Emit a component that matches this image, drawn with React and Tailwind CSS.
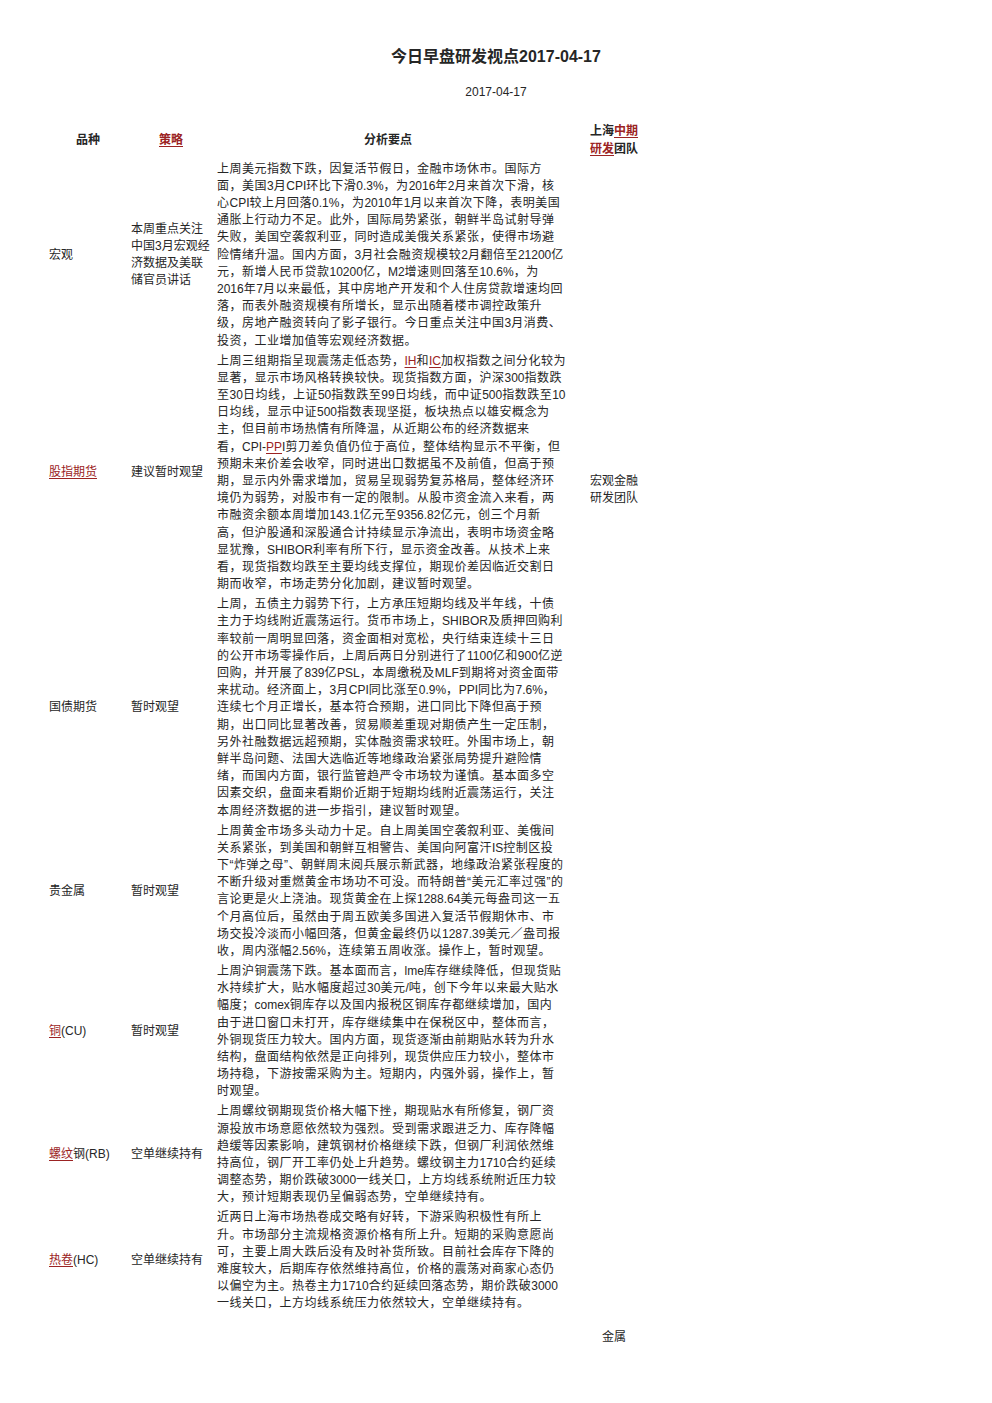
const font = { fontFamily: '"Liberation Sans", "Noto Sans CJK SC", sans-serif' }

const rows = [
  {
    name: '宏观',
    strategy: ['本周重点关注', '中国3月宏观经', '济数据及美联', '储官员讲话'],
    lines: [
      '上周美元指数下跌，因复活节假日，金融市场休市。国际方',
      '面，美国3月CPI环比下滑0.3%，为2016年2月来首次下滑，核',
      '心CPI较上月回落0.1%，为2010年1月以来首次下降，表明美国',
      '通胀上行动力不足。此外，国际局势紧张，朝鲜半岛试射导弹',
      '失败，美国空袭叙利亚，同时造成美俄关系紧张，使得市场避',
      '险情绪升温。国内方面，3月社会融资规模较2月翻倍至21200亿',
      '元，新增人民币贷款10200亿，M2增速则回落至10.6%，为',
      '2016年7月以来最低，其中房地产开发和个人住房贷款增速均回',
      '落，而表外融资规模有所增长，显示出随着楼市调控政策升',
      '级，房地产融资转向了影子银行。今日重点关注中国3月消费、',
      '投资，工业增加值等宏观经济数据。',
    ],
  },
  {
    name: '[股指期货]',
    strategy: ['建议暂时观望'],
    lines: [
      '上周三组期指呈现震荡走低态势，[IH]和[IC]加权指数之间分化较为',
      '显著，显示市场风格转换较快。现货指数方面，沪深300指数跌',
      '至30日均线，上证50指数跌至99日均线，而中证500指数跌至10',
      '日均线，显示中证500指数表现坚挺，板块热点以雄安概念为',
      '主，但目前市场热情有所降温，从近期公布的经济数据来',
      '看，CPI-[PP]I剪刀差负值仍位于高位，整体结构显示不平衡，但',
      '预期未来价差会收窄，同时进出口数据虽不及前值，但高于预',
      '期，显示内外需求增加，贸易呈现弱势复苏格局，整体经济环',
      '境仍为弱势，对股市有一定的限制。从股市资金流入来看，两',
      '市融资余额本周增加143.1亿元至9356.82亿元，创三个月新',
      '高，但沪股通和深股通合计持续显示净流出，表明市场资金略',
      '显犹豫，SHIBOR利率有所下行，显示资金改善。从技术上来',
      '看，现货指数均跌至主要均线支撑位，期现价差因临近交割日',
      '期而收窄，市场走势分化加剧，建议暂时观望。',
    ],
  },
  {
    name: '国债期货',
    strategy: ['暂时观望'],
    lines: [
      '上周，五债主力弱势下行，上方承压短期均线及半年线，十债',
      '主力于均线附近震荡运行。货币市场上，SHIBOR及质押回购利',
      '率较前一周明显回落，资金面相对宽松，央行结束连续十三日',
      '的公开市场零操作后，上周后两日分别进行了1100亿和900亿逆',
      '回购，并开展了839亿PSL，本周缴税及MLF到期将对资金面带',
      '来扰动。经济面上，3月CPI同比涨至0.9%，PPI同比为7.6%，',
      '连续七个月正增长，基本符合预期，进口同比下降但高于预',
      '期，出口同比显著改善，贸易顺差重现对期债产生一定压制，',
      '另外社融数据远超预期，实体融资需求较旺。外围市场上，朝',
      '鲜半岛问题、法国大选临近等地缘政治紧张局势提升避险情',
      '绪，而国内方面，银行监管趋严令市场较为谨慎。基本面多空',
      '因素交织，盘面来看期价近期于短期均线附近震荡运行，关注',
      '本周经济数据的进一步指引，建议暂时观望。',
    ],
  },
  {
    name: '贵金属',
    strategy: ['暂时观望'],
    lines: [
      '上周黄金市场多头动力十足。自上周美国空袭叙利亚、美俄间',
      '关系紧张，到美国和朝鲜互相警告、美国向阿富汗IS控制区投',
      '下“炸弹之母”、朝鲜周末阅兵展示新武器，地缘政治紧张程度的',
      '不断升级对重燃黄金市场功不可没。而特朗普“美元汇率过强”的',
      '言论更是火上浇油。现货黄金在上探1288.64美元每盎司这一五',
      '个月高位后，虽然由于周五欧美多国进入复活节假期休市、市',
      '场交投冷淡而小幅回落，但黄金最终仍以1287.39美元／盎司报',
      '收，周内涨幅2.56%，连续第五周收涨。操作上，暂时观望。',
    ],
  },
  {
    name: '[铜](CU)',
    strategy: ['暂时观望'],
    lines: [
      '上周沪铜震荡下跌。基本面而言，lme库存继续降低，但现货贴',
      '水持续扩大，贴水幅度超过30美元/吨，创下今年以来最大贴水',
      '幅度；comex铜库存以及国内报税区铜库存都继续增加，国内',
      '由于进口窗口未打开，库存继续集中在保税区中，整体而言，',
      '外铜现货压力较大。国内方面，现货逐渐由前期贴水转为升水',
      '结构，盘面结构依然是正向排列，现货供应压力较小，整体市',
      '场持稳，下游按需采购为主。短期内，内强外弱，操作上，暂',
      '时观望。',
    ],
  },
  {
    name: '[螺纹]钢(RB)',
    strategy: ['空单继续持有'],
    lines: [
      '上周螺纹钢期现货价格大幅下挫，期现贴水有所修复，钢厂资',
      '源投放市场意愿依然较为强烈。受到需求跟进乏力、库存降幅',
      '趋缓等因素影响，建筑钢材价格继续下跌，但钢厂利润依然维',
      '持高位，钢厂开工率仍处上升趋势。螺纹钢主力1710合约延续',
      '调整态势，期价跌破3000一线关口，上方均线系统附近压力较',
      '大，预计短期表现仍呈偏弱态势，空单继续持有。',
    ],
  },
  {
    name: '[热卷](HC)',
    strategy: ['空单继续持有'],
    lines: [
      '近两日上海市场热卷成交略有好转，下游采购积极性有所上',
      '升。市场部分主流规格资源价格有所上升。短期的采购意愿尚',
      '可，主要上周大跌后没有及时补货所致。目前社会库存下降的',
      '难度较大，后期库存依然维持高位，价格的震荡对商家心态仍',
      '以偏空为主。热卷主力1710合约延续回落态势，期价跌破3000',
      '一线关口，上方均线系统压力依然较大，空单继续持有。',
    ],
  },
]

// latin runs keep normal spacing, CJK gets a little extra
const Plain = ({ text }) =>
  text.split(/([\x00-\x7F]+)/).map((p, i) =>
    i % 2 ? (
      <span key={i} className="tracking-normal">
        {p}
      </span>
    ) : (
      <span key={i}>{p}</span>
    )
  )

// text in [brackets] is a link
const Rich = ({ text }) =>
  text.split(/\[(.+?)\]/).map((part, i) =>
    i % 2 ? (
      <span key={i} className="text-[#9b2323] underline underline-offset-2">
        <Plain text={part} />
      </span>
    ) : (
      <Plain key={i} text={part} />
    )
  )

const App = () => {
  return (
    <div className="min-h-screen bg-white text-[#262626]" style={font}>
      <div className="pt-[47px] text-center text-[16px] font-bold leading-[20px]">
        今日早盘研发视点2017-04-17
      </div>
      <div className="pt-[17px] text-center text-[12px] leading-[16px]">2017-04-17</div>

      <table className="ml-[47px] mt-[22px] w-[614px] table-fixed border-collapse text-[12px] leading-[17.2px]">
        <colgroup>
          <col className="w-[82px]" />
          <col className="w-[84px]" />
          <col className="w-[350px]" />
          <col className="w-[98px]" />
        </colgroup>
        <thead>
          <tr className="font-bold">
            <th className="py-[1.4px] text-center align-middle">品种</th>
            <th className="py-[1.4px] text-center align-middle">
              <Rich text="[策略]" />
            </th>
            <th className="py-[1.4px] text-center align-middle">分析要点</th>
            <th className="py-[1.4px] pl-[4px] text-center align-middle">
              <div>
                <Rich text="上海[中期]" />
              </div>
              <div>
                <Rich text="[研发]团队" />
              </div>
            </th>
          </tr>
        </thead>
        <tbody>
          {rows.map((row, idx) => (
            <tr key={idx}>
              <td className="py-[1.4px] pl-[2px] align-middle whitespace-nowrap">
                <Rich text={row.name} />
              </td>
              <td className="py-[1.4px] pl-[2px] align-middle whitespace-nowrap">
                {row.strategy.map((s, i) => (
                  <div key={i}>{s}</div>
                ))}
              </td>
              <td className="py-[1.4px] pl-[4px] align-top tracking-[0.5px] whitespace-nowrap">
                {row.lines.map((l, i) => (
                  <div key={i}>
                    <Rich text={l} />
                  </div>
                ))}
              </td>
              {idx === 0 && (
                <td rowSpan={3} className="pl-[4px] text-center align-middle">
                  <div>宏观金融</div>
                  <div>研发团队</div>
                </td>
              )}
              {idx === 3 && (
                <td rowSpan={5} className="pl-[4px] text-center align-middle">
                  金属
                </td>
              )}
            </tr>
          ))}
          <tr>
            <td className="h-[539px]" />
            <td />
            <td />
          </tr>
        </tbody>
      </table>
    </div>
  )
}

export default App
